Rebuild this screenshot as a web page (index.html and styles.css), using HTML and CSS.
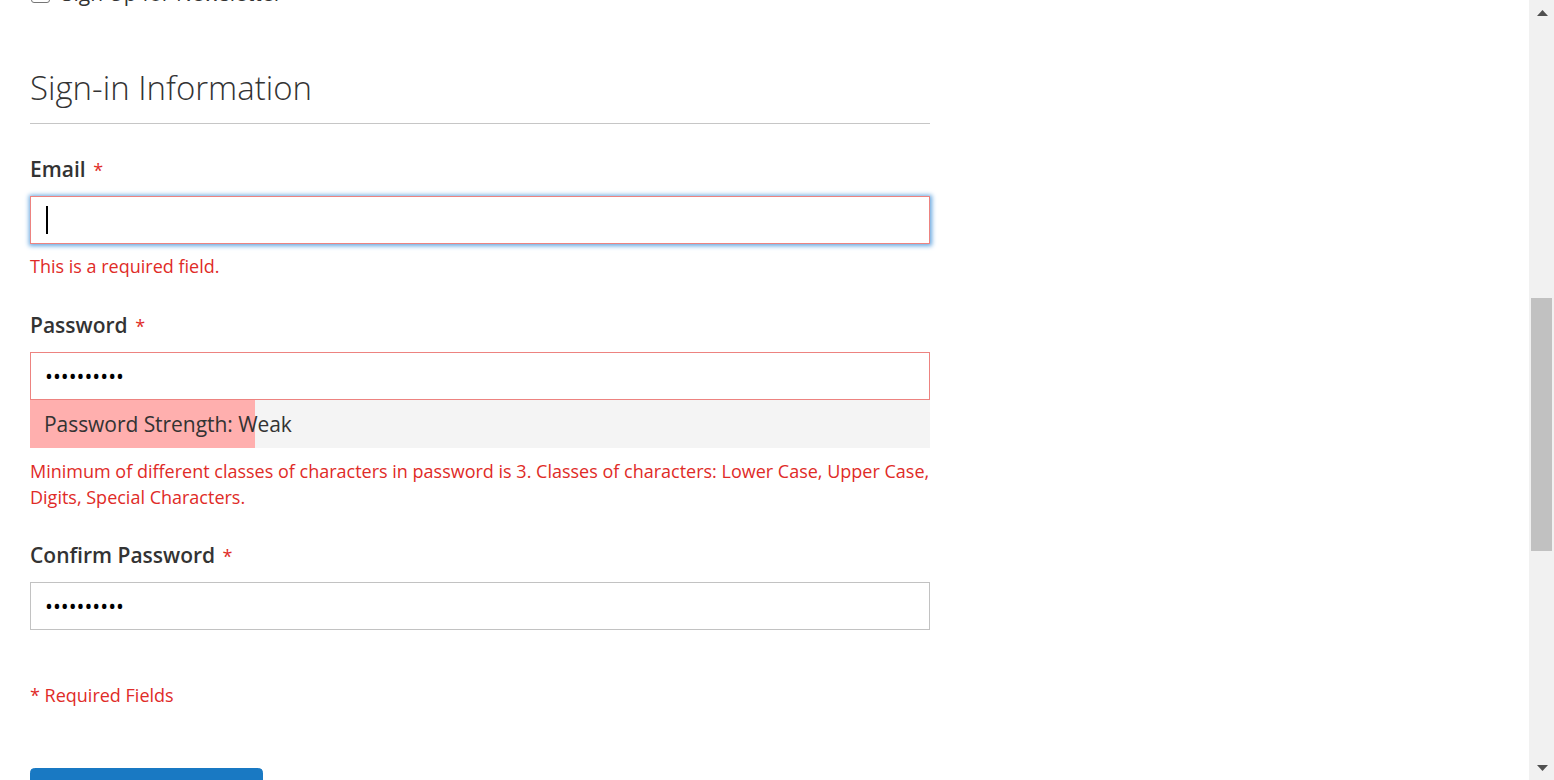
FILE: index.html
```html
<!DOCTYPE html>
<html lang="en">
<head>
<meta charset="utf-8">
<title>Create New Customer Account</title>
<link rel="stylesheet" href="styles.css">
</head>
<body>
<div class="page">
  <main class="content">
    <form class="form" onsubmit="return false">
      <div class="newsletter">
        <span class="checkbox"></span>
        <span class="newsletter-label">Sign Up for Newsletter</span>
      </div>

      <div class="legend">Sign-in Information</div>

      <div class="field">
        <div class="label required">Email</div>
        <div class="input input-error input-focus"><span class="caret"></span></div>
        <div class="error">This is a required field.</div>
      </div>

      <div class="field field-password">
        <div class="label required">Password</div>
        <div class="input input-error"><span class="dots">••••••••••</span></div>
        <div class="meter">
          <div class="meter-bar"></div>
          <div class="meter-label">Password Strength: Weak</div>
        </div>
        <div class="error">Minimum of different classes of characters in password is 3. Classes of characters: Lower Case, Upper Case, Digits, Special Characters.</div>
      </div>

      <div class="field">
        <div class="label required">Confirm Password</div>
        <div class="input"><span class="dots">••••••••••</span></div>
      </div>

      <div class="required-note">* Required Fields</div>

      <button class="primary" type="submit">Create an Account</button>
    </form>
  </main>
  <aside class="scrollbar">
    <div class="sb-btn">
      <svg width="11" height="6" viewBox="0 0 11 6"><polygon points="5.5,0 11,6 0,6" fill="#505050"/></svg>
    </div>
    <div class="sb-track">
      <div class="sb-thumb"></div>
    </div>
    <div class="sb-btn">
      <svg width="11" height="6" viewBox="0 0 11 6"><polygon points="0,0 11,0 5.5,6" fill="#505050"/></svg>
    </div>
  </aside>
</div>
</body>
</html>
```

FILE: styles.css
```css
* {
  box-sizing: border-box;
}

html,
body {
  margin: 0;
  padding: 0;
  height: 780px;
}

body {
  font-family: "Open Sans", "Noto Sans", sans-serif;
  color: #333333;
  background: #ffffff;
  overflow: hidden;
}

.page {
  display: flex;
  height: 780px;
}

.content {
  flex: 1;
  padding-left: 30px;
  overflow: hidden;
}

.form {
  width: 900px;
}

/* newsletter (cut off at top) */
.newsletter {
  display: flex;
  align-items: center;
  gap: 12px;
  height: 30px;
  margin-top: -22px;
  font-size: 21px;
  line-height: 30px;
}

.checkbox {
  width: 19px;
  height: 19px;
  margin-left: 1px;
  border: 1px solid #767676;
  border-radius: 3px;
  background: #ffffff;
}

/* legend */
.legend {
  margin-top: 60px;
  margin-bottom: 30px;
  padding-bottom: 15px;
  border-bottom: 1px solid #c6c6c6;
  font-size: 33px;
  font-weight: 300;
  line-height: 40px;
}

/* fields */
.field {
  margin-bottom: 30.5px;
}

.field-password {
  margin-bottom: 29.5px;
}

.label {
  font-size: 21px;
  font-weight: 600;
  line-height: 30px;
  height: 30px;
  margin-bottom: 12px;
}

.label.required::after {
  content: "*";
  color: #e02b27;
  font-size: 18px;
  font-weight: 400;
  line-height: 1;
  margin-left: 7.5px;
}

.input {
  display: flex;
  align-items: center;
  height: 48px;
  padding: 0 14px;
  border: 1px solid #c2c2c2;
  background: #ffffff;
}

.input-error {
  border-color: #ed8380;
}

.input-focus {
  box-shadow: 0 0 4.5px 1.5px #68a8e0;
}

.caret {
  width: 2px;
  height: 28px;
  margin-left: 1px;
  background: #000000;
}

.dots {
  font-size: 21px;
  color: #000000;
  line-height: 30px;
}

.error {
  margin-top: 10px;
  color: #e02b27;
  font-size: 18px;
  line-height: 25.71px;
}

/* password strength meter */
.meter {
  position: relative;
  height: 48px;
  background: #f4f4f4;
}

.meter-bar {
  position: absolute;
  top: 0;
  left: 0;
  bottom: 0;
  width: 25%;
  background: #ffafae;
}

.meter-label {
  position: relative;
  padding: 0 14px;
  font-size: 21px;
  line-height: 48px;
  letter-spacing: -0.05px;
}

.meter + .error {
  margin-top: 11px;
}

.required-note {
  margin-top: 53px;
  color: #e02b27;
  font-size: 18px;
  line-height: 25.71px;
}

.primary {
  display: block;
  width: 233px;
  margin-top: 59.4px;
  padding: 21px 25px;
  border: 1px solid #1979c3;
  border-radius: 4.5px;
  background: #1979c3;
  color: #ffffff;
  font-family: "Open Sans", "Noto Sans", sans-serif;
  font-size: 27px;
  font-weight: 600;
  line-height: 33px;
}

/* scrollbar */
.scrollbar {
  width: 25px;
  flex: 0 0 25px;
  display: flex;
  flex-direction: column;
  background: #f1f1f1;
}

.sb-btn {
  height: 25px;
  flex: 0 0 25px;
  display: flex;
  align-items: center;
  justify-content: center;
}

.sb-btn svg {
  display: block;
  margin-left: 1px;
}

.sb-track {
  flex: 1;
  display: flex;
  flex-direction: column;
  align-items: center;
}

.sb-thumb {
  width: 21px;
  height: 253px;
  margin-top: 273px;
  background: #c1c1c1;
}
```
